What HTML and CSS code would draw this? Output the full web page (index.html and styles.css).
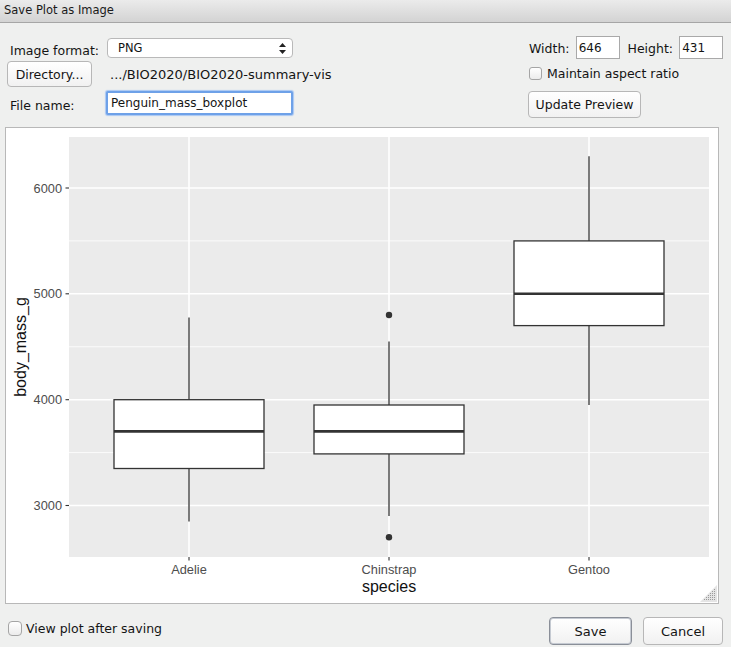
FILE: index.html
```html
<!DOCTYPE html>
<html>
<head>
<meta charset="utf-8">
<title>Save Plot as Image</title>
<link rel="stylesheet" href="styles.css">
</head>
<body>
<div class="window">
  <div class="titlebar">Save Plot as Image</div>
  <div class="controls">
    <div class="left">
      <div class="row r1">
        <span class="lbl">Image format:</span>
        <div class="select"><span>PNG</span>
          <svg class="updown" width="7" height="11" viewBox="0 0 7 11"><path d="M3.5 0 L7 4 L0 4 Z M0 7 L7 7 L3.5 11 Z" fill="#222"/></svg>
        </div>
      </div>
      <div class="row r2">
        <button class="btn dir">Directory...</button>
        <span class="path">.../BIO2020/BIO2020-summary-vis</span>
      </div>
      <div class="row r3">
        <span class="lbl">File name:</span>
        <div class="input focus">Penguin_mass_boxplot</div>
      </div>
    </div>
    <div class="right">
      <div class="row rr1">
        <span class="wl">Width:</span><div class="num">646</div>
        <span class="hl">Height:</span><div class="num">431</div>
      </div>
      <div class="row rr2">
        <span class="cb"></span><span class="cbl">Maintain aspect ratio</span>
      </div>
      <div class="row rr3">
        <button class="btn upd">Update Preview</button>
      </div>
    </div>
  </div>
  <div class="preview">
    <svg class="plot" width="712" height="475" viewBox="6 128 712 475">
      <rect x="69" y="137" width="640" height="420" fill="#ebebeb"/>
      <g stroke="#ffffff" stroke-width="0.8">
        <line x1="69" x2="709" y1="240.9" y2="240.9"/>
        <line x1="69" x2="709" y1="346.75" y2="346.75"/>
        <line x1="69" x2="709" y1="452.6" y2="452.6"/>
      </g>
      <g stroke="#ffffff" stroke-width="1.6">
        <line x1="69" x2="709" y1="188" y2="188"/>
        <line x1="69" x2="709" y1="293.8" y2="293.8"/>
        <line x1="69" x2="709" y1="399.7" y2="399.7"/>
        <line x1="69" x2="709" y1="505.5" y2="505.5"/>
        <line x1="189" x2="189" y1="137" y2="557"/>
        <line x1="389" x2="389" y1="137" y2="557"/>
        <line x1="589" x2="589" y1="137" y2="557"/>
      </g>
      <g stroke="#333333" stroke-width="1.3" fill="#ffffff">
        <line x1="189" x2="189" y1="317.6" y2="399.7"/>
        <line x1="189" x2="189" y1="468.5" y2="521.4"/>
        <rect x="114" y="399.7" width="150" height="68.8"/>
        <line x1="389" x2="389" y1="341.5" y2="405"/>
        <line x1="389" x2="389" y1="453.9" y2="516.1"/>
        <rect x="314" y="405" width="150" height="48.9"/>
        <line x1="589" x2="589" y1="156.3" y2="240.9"/>
        <line x1="589" x2="589" y1="325.6" y2="405"/>
        <rect x="514" y="240.9" width="150" height="84.7"/>
      </g>
      <g stroke="#333333" stroke-width="2.6">
        <line x1="114" x2="264" y1="431.4" y2="431.4"/>
        <line x1="314" x2="464" y1="431.4" y2="431.4"/>
        <line x1="514" x2="664" y1="293.8" y2="293.8"/>
      </g>
      <g fill="#333333">
        <circle cx="389" cy="315" r="3.2"/>
        <circle cx="389" cy="537.2" r="3.2"/>
      </g>
      <g stroke="#333333" stroke-width="1.1">
        <line x1="65.5" x2="69" y1="188" y2="188"/>
        <line x1="65.5" x2="69" y1="293.8" y2="293.8"/>
        <line x1="65.5" x2="69" y1="399.7" y2="399.7"/>
        <line x1="65.5" x2="69" y1="505.5" y2="505.5"/>
        <line x1="189" x2="189" y1="557" y2="560.5"/>
        <line x1="389" x2="389" y1="557" y2="560.5"/>
        <line x1="589" x2="589" y1="557" y2="560.5"/>
      </g>
      <g class="tick" text-anchor="end">
        <text x="62" y="192.6">6000</text>
        <text x="62" y="298.4">5000</text>
        <text x="62" y="404.3">4000</text>
        <text x="62" y="510.1">3000</text>
      </g>
      <g class="tick" text-anchor="middle">
        <text x="189" y="573.5">Adelie</text>
        <text x="389" y="573.5">Chinstrap</text>
        <text x="589" y="573.5">Gentoo</text>
      </g>
      <text class="axt" x="389" y="591.5" text-anchor="middle">species</text>
      <text class="axt" transform="translate(25.5 347) rotate(-90)" text-anchor="middle">body_mass_g</text>
      <polygon points="717,585 717,602 700,602" fill="#e4e4e4"/>
      <g fill="#9a9a9a">
        <rect x="714" y="589" width="1" height="1"/>
        <rect x="712" y="591" width="1" height="1"/><rect x="714" y="591" width="1" height="1"/>
        <rect x="710" y="593" width="1" height="1"/><rect x="712" y="593" width="1" height="1"/><rect x="714" y="593" width="1" height="1"/>
        <rect x="708" y="595" width="1" height="1"/><rect x="710" y="595" width="1" height="1"/><rect x="712" y="595" width="1" height="1"/><rect x="714" y="595" width="1" height="1"/>
        <rect x="706" y="597" width="1" height="1"/><rect x="708" y="597" width="1" height="1"/><rect x="710" y="597" width="1" height="1"/><rect x="712" y="597" width="1" height="1"/><rect x="714" y="597" width="1" height="1"/>
        <rect x="704" y="599" width="1" height="1"/><rect x="706" y="599" width="1" height="1"/><rect x="708" y="599" width="1" height="1"/><rect x="710" y="599" width="1" height="1"/><rect x="712" y="599" width="1" height="1"/><rect x="714" y="599" width="1" height="1"/>
      </g>
    </svg>
  </div>
  <div class="footer">
    <label class="view"><span class="cb big"></span><span>View plot after saving</span></label>
    <div class="actions">
      <button class="btn act save">Save</button>
      <button class="btn act">Cancel</button>
    </div>
  </div>
</div>
</body>
</html>
```
FILE: styles.css
```css
* { box-sizing: border-box; }
html, body { margin: 0; padding: 0; }
body {
  width: 731px;
  height: 647px;
  overflow: hidden;
  background: #eff0ef;
  font-family: "DejaVu Sans", "Liberation Sans", sans-serif;
  font-size: 12.5px;
  color: #141414;
}
.window { width: 731px; height: 647px; }
.titlebar {
  height: 23px;
  padding: 3px 0 0 4px;
  font-size: 11.5px;
  color: #1a1a1a;
  background: linear-gradient(#ebebeb, #d3d3d3);
  border-bottom: 1px solid #a6a6a6;
}
.controls {
  height: 104px;
  display: flex;
  justify-content: space-between;
  padding: 0 8px 0 7px;
}
.left { padding-top: 15px; display: flex; flex-direction: column; gap: 3px; }
.row { display: flex; align-items: center; }
.r1 { height: 20px; }
.r2 { height: 26px; }
.r3 { height: 24px; margin-top: 1px; }
.lbl { width: 100px; padding-left: 3px; padding-top: 4px; }
.select {
  width: 186px;
  height: 20px;
  background: #ffffff;
  border: 1px solid #b9b9b9;
  border-radius: 4px;
  display: flex;
  align-items: center;
  justify-content: space-between;
  padding: 0 6px 0 10px;
  font-size: 11.5px;
}
.btn {
  font-family: inherit;
  font-size: 12.5px;
  color: #141414;
  background: linear-gradient(#ffffff, #f1f1f1);
  border: 1px solid #b7b7b7;
  border-radius: 4px;
  padding: 0;
}
.dir { width: 85px; height: 26px; }
.path { margin-left: 18px; font-size: 13px; }
.input {
  width: 187px;
  height: 24px;
  margin-left: -1px;
  background: #ffffff;
  padding: 3px 0 0 3px;
  font-size: 12px;
}
.focus {
  border: 2px solid #6ea1e8;
  border-radius: 2px;
  box-shadow: 0 0 1px 1px #a8c7f3;
}
.right { padding-top: 13px; width: 195px; display: flex; flex-direction: column; }
.rr1 { height: 23px; }
.wl { margin-left: 1px; width: 47px; padding-top: 2px; }
.hl { margin-left: 8px; width: 52px; padding-top: 2px; }
.num {
  width: 44px;
  height: 23px;
  background: #ffffff;
  border: 1px solid #a9a9a9;
  padding: 4px 0 0 2px;
  font-size: 12px;
}
.rr2 { height: 21px; margin-top: 4px; }
.cb {
  width: 13px;
  height: 13px;
  margin-left: 1px;
  border: 1px solid #a5a5a5;
  border-radius: 3px;
  background: linear-gradient(#ffffff, #ececec);
}
.cbl { margin-left: 5px; }
.rr3 { margin-top: 7px; }
.upd { width: 113px; height: 27px; }
.preview {
  margin-left: 5px;
  width: 714px;
  height: 477px;
  background: #ffffff;
  border: 1px solid #b8b8b8;
}
.plot { display: block; }
.tick { font-family: "Liberation Sans", Arial, sans-serif; font-size: 12.8px; fill: #4d4d4d; }
.axt { font-family: "Liberation Sans", Arial, sans-serif; font-size: 16px; fill: #111111; }
.footer {
  height: 43px;
  display: flex;
  justify-content: space-between;
  align-items: flex-start;
  padding: 0 8px 0 8px;
}
.view { display: flex; align-items: center; margin-top: 17px; }
.cb.big { width: 14px; height: 15px; margin: 0 4px 0 0; border-radius: 4px; }
.actions { display: flex; gap: 11px; margin-top: 13px; }
.act { height: 28px; width: 80px; font-size: 13px; }
.save { width: 83px; border-color: #8a8f98; box-shadow: inset 0 0 0 1px #c5cad2; }
```
